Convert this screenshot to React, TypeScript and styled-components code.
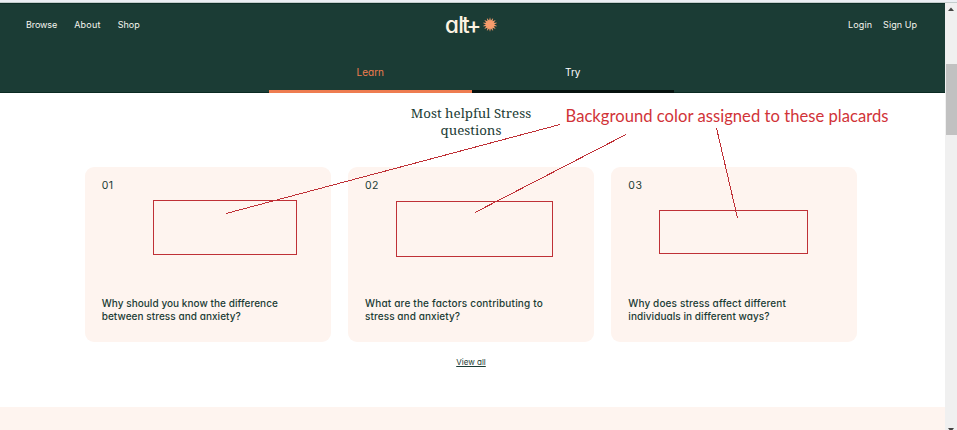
import React from 'react';
import styled, { createGlobalStyle } from 'styled-components';

const GlobalStyle = createGlobalStyle`
  * { box-sizing: border-box; }
  body {
    margin: 0;
    overflow: hidden;
    background: #fff;
    font-family: Inter, 'Liberation Sans', sans-serif;
    font-feature-settings: 'cv11';
    color: #1b3c35;
  }
`;

const Window = styled.div`
  position: relative;
  display: flex;
  flex-direction: column;
  width: 957px;
  height: 430px;
  overflow: hidden;
`;

const TopEdge = styled.div`
  flex: none;
  height: 3px;
  background: #eceff4;
  border-bottom: 1px solid #c3cdcc;
`;

const Viewport = styled.div`
  flex: 1;
  display: flex;
  min-height: 0;
`;

const Page = styled.div`
  width: 945px;
  display: flex;
  flex-direction: column;
`;

const Header = styled.header`
  flex: none;
  height: 90px;
  display: flex;
  flex-direction: column;
  background: #1b3c35;
  box-shadow: inset 0 -1px #0b2a23, inset 0 1px #0f2e27;
`;

const NavBar = styled.nav`
  height: 45px;
  display: grid;
  grid-template-columns: 1fr auto 1fr;
  align-items: center;
  padding: 0 28px 2px 26px;
`;

const NavGroup = styled.div<{ $gap: number; $end?: boolean }>`
  display: flex;
  gap: ${(p) => p.$gap}px;
  justify-content: ${(p) => (p.$end ? 'flex-end' : 'flex-start')};
`;

const NavLink = styled.a<{ $tracking?: number }>`
  font-size: 9px;
  line-height: 12px;
  letter-spacing: ${(p) => p.$tracking ?? 0}px;
  color: #f5f5ee;
`;

const Logo = styled.div`
  display: flex;
  align-items: center;
  height: 24px;
  width: 53px;
  color: #fdf3e2;
  font-size: 22.5px;
  line-height: 24px;
  font-weight: 500;
`;

const Word = styled.span<{ $tracking: number; $width: number }>`
  flex: none;
  width: ${(p) => p.$width}px;
  white-space: nowrap;
  letter-spacing: ${(p) => p.$tracking}px;
`;

const Sun = styled.svg`
  flex: none;
  width: 14px;
  height: 15px;
  margin-left: 1px;
`;

const Tabs = styled.div`
  display: flex;
  margin-left: 269px;
  width: 405px;
  height: 45px;
`;

const Tab = styled.div<{ $active?: boolean }>`
  flex: 1;
  padding-top: 17px;
  text-align: center;
  font-size: 10px;
  line-height: 14px;
  color: ${(p) => (p.$active ? '#ef7d4f' : '#fff')};
  border-bottom: 3px solid ${(p) => (p.$active ? '#ee7c50' : '#06110f')};
`;

const Section = styled.main`
  flex: 1;
  display: flex;
  flex-direction: column;
  align-items: center;
  padding-right: 3px;
`;

const Heading = styled.h2`
  margin: 12px 0 0;
  width: 150px;
  text-align: center;
  font: 400 13.3px/17px 'Noto Serif', 'Liberation Serif', serif;
`;

const Cards = styled.div`
  display: grid;
  grid-template-columns: repeat(3, 246px);
  gap: 17.3px;
  margin-top: 28px;
`;

const Card = styled.article`
  height: 175px;
  padding: 12px 17px 18px;
  display: flex;
  flex-direction: column;
  justify-content: space-between;
  border-radius: 9px;
  background: #fef4ef;
`;

const Index = styled.span`
  font-size: 10.5px;
  line-height: 14px;
  letter-spacing: 0.5px;
`;

const Question = styled.p`
  margin: 0;
  font-size: 10px;
  line-height: 13.6px;
  font-weight: 500;
`;

const Line = styled.span<{ $tracking: number }>`
  display: block;
  white-space: nowrap;
  letter-spacing: ${(p) => p.$tracking}px;
`;

const ViewAll = styled.a`
  margin-top: 14px;
  font-size: 8px;
  line-height: 12px;
  text-decoration: underline;
`;

const Band = styled.div`
  flex: none;
  height: 23px;
  background: #fef4ef;
`;

const Scrollbar = styled.div`
  width: 12px;
  display: flex;
  flex-direction: column;
  justify-content: space-between;
  background: #f0f0f0;
`;

const ScrollThumb = styled.div`
  width: 11px;
  height: 71px;
  margin: 54px 0 auto 1px;
  background: #c1c1c1;
`;

const Arrow = styled.svg<{ $down?: boolean }>`
  display: block;
  width: 12px;
  height: ${(p) => (p.$down ? 2 : 7)}px;
  overflow: visible;
`;

const Annotations = styled.svg`
  position: absolute;
  inset: 0;
  width: 957px;
  height: 430px;
  pointer-events: none;
`;

const Note = styled.div`
  position: absolute;
  left: 565.5px;
  top: 105px;
  white-space: nowrap;
  font: 400 16.6px/22px Lato, 'Open Sans', sans-serif;
  letter-spacing: 0.03px;
  color: #d13338;
`;

const cards = [
  {
    index: '01',
    lines: [
      { text: 'Why should you know the difference', tracking: 0.05 },
      { text: 'between stress and anxiety?', tracking: 0.05 },
    ],
  },
  {
    index: '02',
    lines: [
      { text: 'What are the factors contributing to', tracking: 0.18 },
      { text: 'stress and anxiety?', tracking: 0.08 },
    ],
  },
  {
    index: '03',
    lines: [
      { text: 'Why does stress affect different', tracking: 0.13 },
      { text: 'individuals in different ways?', tracking: 0.06 },
    ],
  },
];

const RAYS = 14;
const sunPoints = Array.from({ length: RAYS * 2 }, (_, i) => {
  const r = i % 2 ? 4.1 : 7.3;
  const a = (Math.PI * i) / RAYS - Math.PI / 2;
  return `${(7 + r * Math.cos(a)).toFixed(2)},${(7.5 + r * Math.sin(a)).toFixed(2)}`;
}).join(' ');

export default function App() {
  return (
    <Window>
      <GlobalStyle />
      <TopEdge />
      <Viewport>
        <Page>
          <Header>
            <NavBar>
              <NavGroup $gap={17}>
                <NavLink $tracking={-0.1}>Browse</NavLink>
                <NavLink $tracking={0.25}>About</NavLink>
                <NavLink>Shop</NavLink>
              </NavGroup>
              <Logo>
                <Word $tracking={-0.6} $width={17}>al</Word>
                <Word $tracking={-3} $width={20}>t+</Word>
                <Sun viewBox="0 0 14 15">
                  <polygon points={sunPoints} fill="#f79c6c" />
                </Sun>
              </Logo>
              <NavGroup $gap={11} $end>
                <NavLink $tracking={0.1}>Login</NavLink>
                <NavLink $tracking={0.05}>Sign Up</NavLink>
              </NavGroup>
            </NavBar>
            <Tabs>
              <Tab $active>Learn</Tab>
              <Tab>Try</Tab>
            </Tabs>
          </Header>
          <Section>
            <Heading>Most helpful Stress questions</Heading>
            <Cards>
              {cards.map((card) => (
                <Card key={card.index}>
                  <Index>{card.index}</Index>
                  <Question>
                    {card.lines.map((line) => (
                      <Line key={line.text} $tracking={line.tracking}>
                        {line.text}
                      </Line>
                    ))}
                  </Question>
                </Card>
              ))}
            </Cards>
            <ViewAll>View all</ViewAll>
          </Section>
          <Band />
        </Page>
        <Scrollbar>
          <Arrow viewBox="0 0 12 7">
            <path d="M3 8 6 4.5 9 8Z" fill="#444" />
          </Arrow>
          <ScrollThumb />
          <Arrow $down viewBox="0 0 12 2">
            <path d="M3 0H9L7.5 2H4.5Z" fill="#444" />
          </Arrow>
        </Scrollbar>
      </Viewport>
      <Annotations fill="none" stroke="#bf3036" strokeWidth="1">
        <g shapeRendering="crispEdges">
          <rect x="153.5" y="200.5" width="143" height="54" />
          <rect x="396.5" y="201.5" width="156" height="55" />
          <rect x="659.5" y="210.5" width="148" height="43" />
          <path d="M226 213.5 560 124.5M475 212.5 626 134.5M716.5 128 737.5 218" />
        </g>
      </Annotations>
      <Note>Background color assigned to these placards</Note>
    </Window>
  );
}
